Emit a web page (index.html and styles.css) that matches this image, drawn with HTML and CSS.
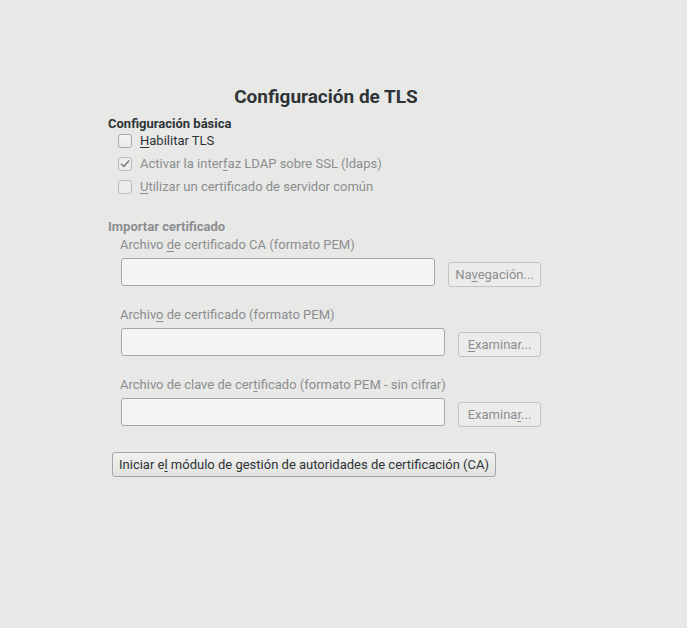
FILE: index.html
```html
<!DOCTYPE html>
<html lang="es">
<head>
<meta charset="utf-8">
<title>Configuración de TLS</title>
<link rel="stylesheet" href="styles.css">
</head>
<body>
<main class="page">
  <h1 class="title">Configuración de TLS</h1>

  <section class="basic">
    <h2 class="section-head">Configuración básica</h2>
    <label class="check-row">
      <span class="check"></span>
      <span class="check-label"><u>H</u>abilitar TLS</span>
    </label>
    <label class="check-row disabled">
      <span class="check checked">
        <svg viewBox="0 0 14 14" width="14" height="14"><path d="M2.8 7.2 L5.6 10 L11.4 3.4" fill="none" stroke="#7d8081" stroke-width="1.8" stroke-linecap="round" stroke-linejoin="round"/></svg>
      </span>
      <span class="check-label">Activar la inter<u>f</u>az LDAP sobre SSL (ldaps)</span>
    </label>
    <label class="check-row disabled">
      <span class="check"></span>
      <span class="check-label"><u>U</u>tilizar un certificado de servidor común</span>
    </label>
  </section>

  <section class="import">
    <h2 class="section-head muted">Importar certificado</h2>

    <div class="field">
      <div class="field-label">Archivo <u>d</u>e certificado CA (formato PEM)</div>
      <div class="field-row">
        <div class="input short"></div>
        <button class="btn small wide">Na<u>v</u>egación...</button>
      </div>
    </div>

    <div class="field">
      <div class="field-label">Archiv<u>o</u> de certificado (formato PEM)</div>
      <div class="field-row">
        <div class="input"></div>
        <button class="btn small"><u>E</u>xaminar...</button>
      </div>
    </div>

    <div class="field">
      <div class="field-label">Archivo de clave de cer<u>t</u>ificado (formato PEM - sin cifrar)</div>
      <div class="field-row">
        <div class="input"></div>
        <button class="btn small">Examina<u>r</u>...</button>
      </div>
    </div>
  </section>

  <button class="btn main-btn">Iniciar e<u>l</u> módulo de gestión de autoridades de certificación (CA)</button>
</main>
</body>
</html>
```

FILE: styles.css
```css
* { box-sizing: border-box; }

html, body {
  margin: 0;
  padding: 0;
  background: #e8e8e7;
  font-family: Roboto, "Noto Sans", sans-serif;
  color: #2e3436;
}

body {
  width: 687px;
  height: 628px;
  overflow: hidden;
}

.page {
  padding: 85px 0 0 108px;
  width: 544px;
}

.title {
  margin: 0;
  font-size: 19px;
  font-weight: 700;
  line-height: 23px;
  text-align: center;
  color: #2e3436;
}

.section-head {
  margin: 0;
  font-size: 13px;
  font-weight: 700;
  line-height: 16px;
  color: #2e3436;
}

.section-head.muted {
  color: #8b8e8f;
}

.basic {
  margin-top: 8px;
}

.basic .section-head {
  margin-bottom: -3px;
}

u {
  text-decoration: underline;
  text-underline-offset: 2px;
  text-decoration-thickness: 1px;
}

.check-row {
  display: flex;
  align-items: center;
  height: 23px;
  padding-left: 10px;
  font-size: 13px;
}

.check {
  width: 14px;
  height: 14px;
  border: 1px solid #a5a8a8;
  border-radius: 3px;
  background: linear-gradient(#f4f4f3, #e9e9e8);
  display: flex;
  align-items: center;
  justify-content: center;
  flex: none;
}

.check svg { display: block; }

.disabled .check {
  border-color: #b9bbbb;
  background: #ededec;
}

.check-label {
  margin-left: 8px;
  line-height: 16px;
}

.disabled .check-label {
  color: #8b8e8f;
}

.import {
  margin-top: 21px;
}

.field {
  margin-top: 2px;
}

.field + .field {
  margin-top: 20px;
}

.field-label {
  padding-left: 12px;
  font-size: 13px;
  line-height: 16px;
  color: #8b8e8f;
}

.field-row {
  display: flex;
  align-items: flex-start;
  padding-left: 13px;
  margin-top: 5px;
  width: 433px;
}

.input {
  width: 324px;
  height: 28px;
  border: 1px solid #a5a8a8;
  border-radius: 3px;
  background: #f4f4f3;
}

.input.short {
  width: 314px;
}

.btn {
  font-family: Roboto, "Noto Sans", sans-serif;
  font-size: 13px;
  color: #2e3436;
  border: 1px solid #b4b7b7;
  border-radius: 3px;
  background: linear-gradient(#efefee, #e3e3e2);
  padding: 0 6px;
  margin: 0;
  cursor: default;
}

.btn.small {
  margin-left: auto;
  margin-top: 4px;
  height: 25px;
  width: 83px;
  color: #8b8e8f;
  border-color: #c2c4c4;
  background: #ebebea;
  padding: 0;
}

.btn.small.wide {
  width: 93px;
}

.main-btn {
  display: block;
  margin: 25px 0 0 4px;
  height: 25px;
  width: 384px;
  padding: 0;
  border-color: #a5a8a8;
  background: linear-gradient(#f0f0ef, #e2e2e1);
}
```
